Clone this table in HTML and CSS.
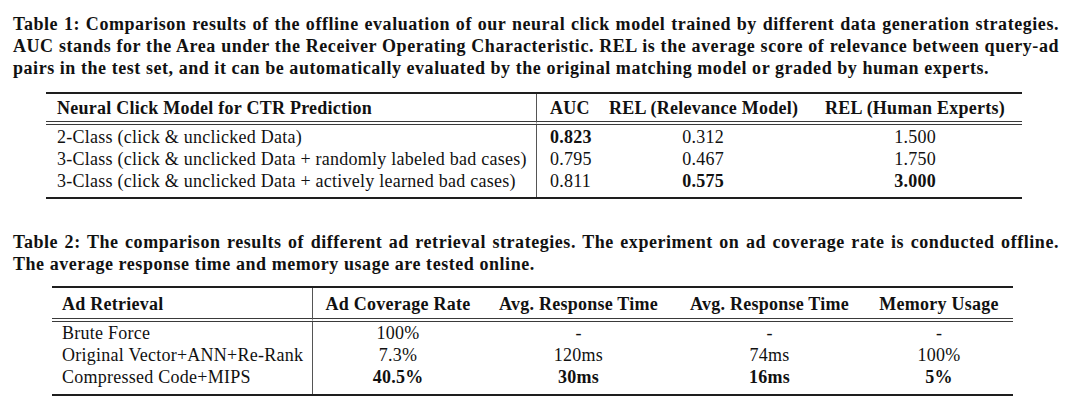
FILE: index.html
```html
<!DOCTYPE html>
<html lang="en">
<head>
<meta charset="utf-8">
<title>Tables</title>
<link rel="stylesheet" href="styles.css">
</head>
<body>
<div class="page">
  <p class="caption cap1">
    <span class="line">Table 1: Comparison results of the offline evaluation of our neural click model trained by different data generation strategies.</span>
    <span class="line">AUC stands for the Area under the Receiver Operating Characteristic. REL is the average score of relevance between query-ad</span>
    <span class="line last">pairs in the test set, and it can be automatically evaluated by the original matching model or graded by human experts.</span>
  </p>
  <table class="tbl t1">
    <thead>
      <tr>
        <th class="c-model">Neural Click Model for CTR Prediction</th>
        <th class="c-auc">AUC</th>
        <th class="c-relm">REL (Relevance Model)</th>
        <th class="c-relh">REL (Human Experts)</th>
      </tr>
    </thead>
    <tbody>
      <tr>
        <td class="c-model">2-Class (click &amp; unclicked Data)</td>
        <td class="c-auc"><b>0.823</b></td>
        <td class="c-relm">0.312</td>
        <td class="c-relh">1.500</td>
      </tr>
      <tr>
        <td class="c-model">3-Class (click &amp; unclicked Data + randomly labeled bad cases)</td>
        <td class="c-auc">0.795</td>
        <td class="c-relm">0.467</td>
        <td class="c-relh">1.750</td>
      </tr>
      <tr>
        <td class="c-model">3-Class (click &amp; unclicked Data + actively learned bad cases)</td>
        <td class="c-auc">0.811</td>
        <td class="c-relm"><b>0.575</b></td>
        <td class="c-relh"><b>3.000</b></td>
      </tr>
    </tbody>
  </table>

  <p class="caption cap2">
    <span class="line">Table 2: The comparison results of different ad retrieval strategies. The experiment on ad coverage rate is conducted offline.</span>
    <span class="line last">The average response time and memory usage are tested online.</span>
  </p>
  <table class="tbl t2">
    <thead>
      <tr>
        <th class="c-ret">Ad Retrieval</th>
        <th class="c-cov">Ad Coverage Rate</th>
        <th class="c-rt1">Avg. Response Time</th>
        <th class="c-rt2">Avg. Response Time</th>
        <th class="c-mem">Memory Usage</th>
      </tr>
    </thead>
    <tbody>
      <tr>
        <td class="c-ret">Brute Force</td>
        <td class="c-cov">100%</td>
        <td class="c-rt1">-</td>
        <td class="c-rt2">-</td>
        <td class="c-mem">-</td>
      </tr>
      <tr>
        <td class="c-ret">Original Vector+ANN+Re-Rank</td>
        <td class="c-cov">7.3%</td>
        <td class="c-rt1">120ms</td>
        <td class="c-rt2">74ms</td>
        <td class="c-mem">100%</td>
      </tr>
      <tr>
        <td class="c-ret">Compressed Code+MIPS</td>
        <td class="c-cov"><b>40.5%</b></td>
        <td class="c-rt1"><b>30ms</b></td>
        <td class="c-rt2"><b>16ms</b></td>
        <td class="c-mem"><b>5%</b></td>
      </tr>
    </tbody>
  </table>
</div>
</body>
</html>
```
FILE: styles.css
```css
html, body {
  margin: 0;
  padding: 0;
  background: #ffffff;
}

body {
  font-family: "Liberation Serif", "Times New Roman", serif;
  color: #111111;
}

.page {
  width: 1080px;
  height: 410px;
  overflow: hidden;
}

.caption {
  margin: 0 0 0 13px;
  width: 1046px;
  font-size: 18px;
  line-height: 22px;
  font-weight: bold;
  letter-spacing: 0.55px;
}

.caption .line {
  display: block;
  text-align: justify;
  text-align-last: justify;
}

.caption .line.last {
  text-align-last: left;
}

.cap1 {
  padding-top: 13px;
}

.cap2 {
  margin-top: 32px;
}

.tbl {
  border-collapse: separate;
  border-spacing: 0;
  table-layout: fixed;
  font-size: 18px;
  line-height: 22px;
  letter-spacing: 0.25px;
  border-top: 2px solid #1e1e1e;
  border-bottom: 2px solid #1e1e1e;
}

.tbl th,
.tbl td {
  box-sizing: border-box;
  padding: 0 11px;
  white-space: nowrap;
  text-align: center;
  vertical-align: middle;
}

.tbl th {
  font-weight: bold;
  border-bottom: 4px double #3a3a3a;
}

.tbl b {
  font-weight: bold;
}

/* Table 1 */
.t1 {
  margin: 13px 0 0 46px;
  width: 976px;
}

.t1 th {
  padding-top: 3px;
  padding-bottom: 2px;
}

.t1 tbody tr:first-child td {
  padding-top: 1px;
}

.t1 tbody tr:last-child td {
  padding-bottom: 5px;
}

.t1 .c-model {
  width: 491px;
  text-align: left;
  border-right: 1px solid #555;
}

.t1 .c-auc {
  width: 61px;
  text-align: left;
  padding-left: 13px;
  padding-right: 0;
}

.t1 .c-relm {
  width: 210px;
}

.t1 .c-relh {
  width: 214px;
}

/* Table 2 */
.t2 {
  margin: 11px 0 0 52px;
  width: 961px;
}

.t2 th {
  padding-top: 5px;
  padding-bottom: 3px;
}

.t2 tbody tr:last-child td {
  padding-bottom: 6px;
}

.t2 .c-ret {
  width: 261px;
  text-align: left;
  padding-left: 10px;
  border-right: 1px solid #555;
}

.t2 .c-cov {
  width: 170px;
}

.t2 .c-rt1,
.t2 .c-rt2 {
  width: 191px;
}

.t2 .c-mem {
  width: 148px;
}
```
